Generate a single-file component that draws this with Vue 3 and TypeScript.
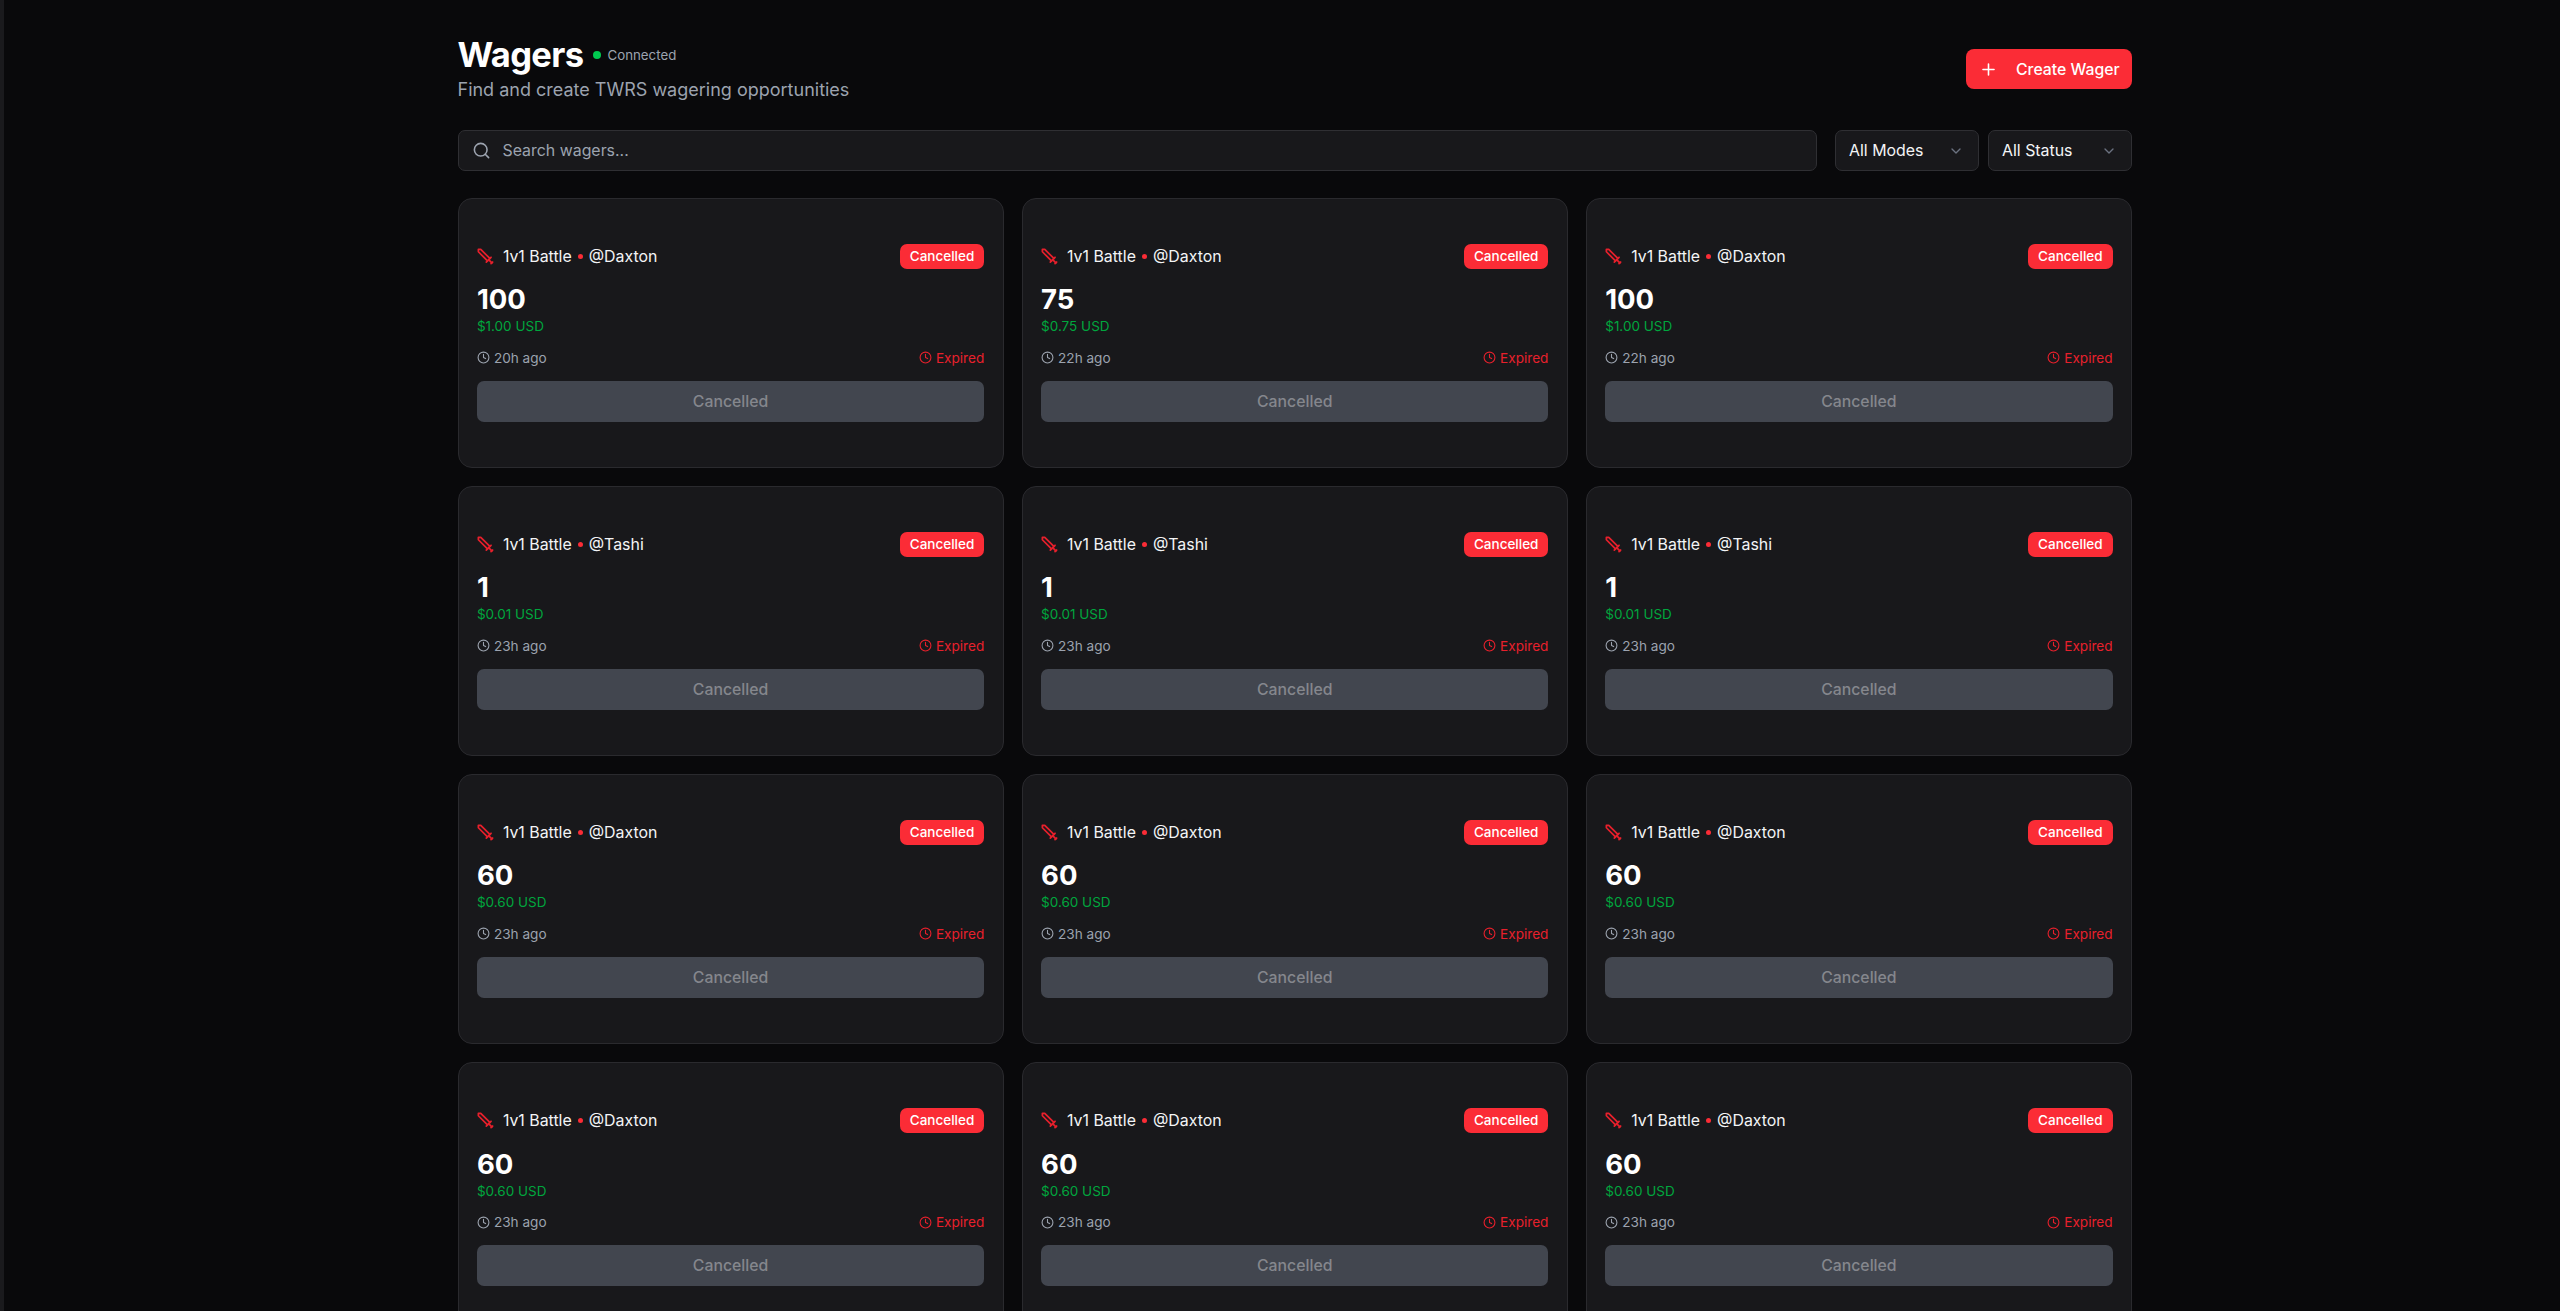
<script setup lang="ts">
interface Wager {
  user: string;
  amount: string;
  usd: string;
  age: string;
}

const wagers: Wager[] = [
  { user: 'Daxton', amount: '100', usd: '$1.00 USD', age: '20h ago' },
  { user: 'Daxton', amount: '75', usd: '$0.75 USD', age: '22h ago' },
  { user: 'Daxton', amount: '100', usd: '$1.00 USD', age: '22h ago' },
  { user: 'Tashi', amount: '1', usd: '$0.01 USD', age: '23h ago' },
  { user: 'Tashi', amount: '1', usd: '$0.01 USD', age: '23h ago' },
  { user: 'Tashi', amount: '1', usd: '$0.01 USD', age: '23h ago' },
  { user: 'Daxton', amount: '60', usd: '$0.60 USD', age: '23h ago' },
  { user: 'Daxton', amount: '60', usd: '$0.60 USD', age: '23h ago' },
  { user: 'Daxton', amount: '60', usd: '$0.60 USD', age: '23h ago' },
  { user: 'Daxton', amount: '60', usd: '$0.60 USD', age: '23h ago' },
  { user: 'Daxton', amount: '60', usd: '$0.60 USD', age: '23h ago' },
  { user: 'Daxton', amount: '60', usd: '$0.60 USD', age: '23h ago' },
];
</script>

<template>
  <div class="page">
    <div class="strip"></div>
    <main class="main">
      <header class="top">
        <div>
          <div class="title-row">
            <h1>Wagers</h1>
            <span class="dot"></span>
            <span class="conn">Connected</span>
          </div>
          <p class="sub">Find and create TWRS wagering opportunities</p>
        </div>
        <button class="create">
          <svg width="19" height="19" viewBox="0 0 24 24" fill="none" stroke="currentColor" stroke-width="2" stroke-linecap="round" stroke-linejoin="round"><path d="M5 12h14" /><path d="M12 5v14" /></svg>
          <span>Create Wager</span>
        </button>
      </header>

      <div class="filters">
        <div class="search">
          <svg width="19" height="19" viewBox="0 0 24 24" fill="none" stroke="currentColor" stroke-width="2" stroke-linecap="round" stroke-linejoin="round"><circle cx="11" cy="11" r="8" /><path d="m21 21-4.3-4.3" /></svg>
          <span>Search wagers...</span>
        </div>
        <div class="select" v-for="label in ['All Modes', 'All Status']" :key="label">
          <span>{{ label }}</span>
          <svg width="16" height="16" viewBox="0 0 24 24" fill="none" stroke="currentColor" stroke-width="2" stroke-linecap="round" stroke-linejoin="round"><path d="m6 9 6 6 6-6" /></svg>
        </div>
      </div>

      <section class="grid">
        <article class="card" v-for="(w, i) in wagers" :key="i">
          <div class="card-head">
            <div class="mode">
              <svg class="sword" width="19" height="19" viewBox="0 0 24 24" fill="none" stroke="currentColor" stroke-width="2.2" stroke-linecap="round" stroke-linejoin="round"><polyline points="14.5 17.5 3 6 3 3 6 3 17.5 14.5" /><line x1="13" y1="19" x2="19" y2="13" /><line x1="16" y1="16" x2="20" y2="20" /><line x1="19" y1="21" x2="21" y2="19" /></svg>
              <span>1v1 Battle</span>
              <i class="sep"></i>
              <span>@{{ w.user }}</span>
            </div>
            <span class="badge">Cancelled</span>
          </div>
          <div class="amount">{{ w.amount }}</div>
          <div class="usd">{{ w.usd }}</div>
          <div class="meta">
            <span class="when">
              <svg width="13" height="13" viewBox="0 0 24 24" fill="none" stroke="currentColor" stroke-width="2" stroke-linecap="round" stroke-linejoin="round"><circle cx="12" cy="12" r="10" /><polyline points="12 6 12 12 16 14" /></svg>
              {{ w.age }}
            </span>
            <span class="expired">
              <svg width="13" height="13" viewBox="0 0 24 24" fill="none" stroke="currentColor" stroke-width="2" stroke-linecap="round" stroke-linejoin="round"><circle cx="12" cy="12" r="10" /><polyline points="12 6 12 12 16 14" /></svg>
              Expired
            </span>
          </div>
          <button class="cancelled" disabled>Cancelled</button>
        </article>
      </section>
    </main>
  </div>
</template>

<style>
html,
body {
  margin: 0;
  height: 100%;
  overflow: hidden;
  background: #09090b;
}
</style>

<style scoped>
.page {
  display: flex;
  height: 1311px;
  overflow: hidden;
  background: #09090b;
  font-family: Inter, 'Noto Sans', sans-serif;
  color: #fff;
}

.strip {
  width: 4px;
  flex: none;
  background: #1a1a1d;
}

.main {
  flex: 1;
  min-width: 0;
  padding: 34px 428px 0 453.5px;
}

.top {
  display: flex;
  justify-content: space-between;
  align-items: center;
}

.title-row {
  display: flex;
  align-items: center;
}

h1 {
  margin: 0;
  font-size: 34.5px;
  line-height: 42px;
  font-weight: 700;
  letter-spacing: -0.6px;
}

.dot {
  width: 8px;
  height: 8px;
  border-radius: 50%;
  background: #00c950;
  margin: 0 6px 0 10px;
}

.conn {
  font-size: 13.3px;
  color: #9ca3af;
}

.sub {
  margin: 1px 0 0;
  font-size: 18px;
  line-height: 26px;
  color: #9ca3af;
}

.create {
  display: flex;
  align-items: center;
  gap: 18px;
  width: 166px;
  height: 40.5px;
  margin-top: 1px;
  box-sizing: border-box;
  padding: 0 0 0 13px;
  border: 0;
  border-radius: 8px;
  background: #fb2c36;
  color: #fff;
  font: 500 15.8px Inter, sans-serif;
}

.filters {
  display: flex;
  gap: 9px;
  margin-top: 27px;
}

.search,
.select {
  height: 41px;
  box-sizing: border-box;
  display: flex;
  align-items: center;
  background: #18181b;
  border: 1px solid #2f2f33;
  border-radius: 7px;
  font-size: 15.9px;
}

.search {
  flex: 1;
  gap: 12px;
  margin-right: 9.5px;
  padding-left: 13px;
  color: #9ca3af;
}

.select {
  width: 144px;
  justify-content: space-between;
  padding: 0 14px 0 13px;
  color: #f3f4f6;
}

.select svg {
  color: #6b7280;
}

.grid {
  display: grid;
  grid-template-columns: repeat(3, 1fr);
  column-gap: 18px;
  row-gap: 18px;
  margin-top: 26.6px;
}

.card {
  box-sizing: border-box;
  height: 270.2px;
  padding: 45px 18.4px 0;
  background: #18181b;
  border: 1px solid #2a2a2e;
  border-radius: 14px;
}

.card-head {
  display: flex;
  justify-content: space-between;
  align-items: center;
}

.mode {
  display: flex;
  align-items: center;
  font-size: 15.9px;
  color: #f3f4f6;
}

.sword {
  color: #e7202c;
  margin-right: 8px;
  margin-left: -1px;
}

.sep {
  width: 5px;
  height: 5px;
  border-radius: 50%;
  background: #fb2c36;
  margin: 0 6px;
}

.badge {
  height: 25px;
  line-height: 25px;
  padding: 0 10px;
  border-radius: 7px;
  background: #fb2c36;
  color: #fff;
  font-size: 13.5px;
  font-weight: 500;
}

.amount {
  margin-top: 13.5px;
  font-size: 27.5px;
  line-height: 34px;
  font-weight: 700;
}

.usd {
  font-size: 13.5px;
  line-height: 20px;
  color: #00a63e;
}

.meta {
  display: flex;
  justify-content: space-between;
  margin-top: 11.5px;
  font-size: 13.6px;
  line-height: 20px;
}

.when,
.expired {
  display: flex;
  align-items: center;
  gap: 4px;
}

.when {
  color: #9ca3af;
}

.expired {
  color: #e7202c;
}

.cancelled {
  display: block;
  width: 100%;
  height: 41px;
  margin-top: 13px;
  border: 0;
  border-radius: 7px;
  background: #42464f;
  color: #85878d;
  font: 500 15.8px Inter, sans-serif;
}
</style>
